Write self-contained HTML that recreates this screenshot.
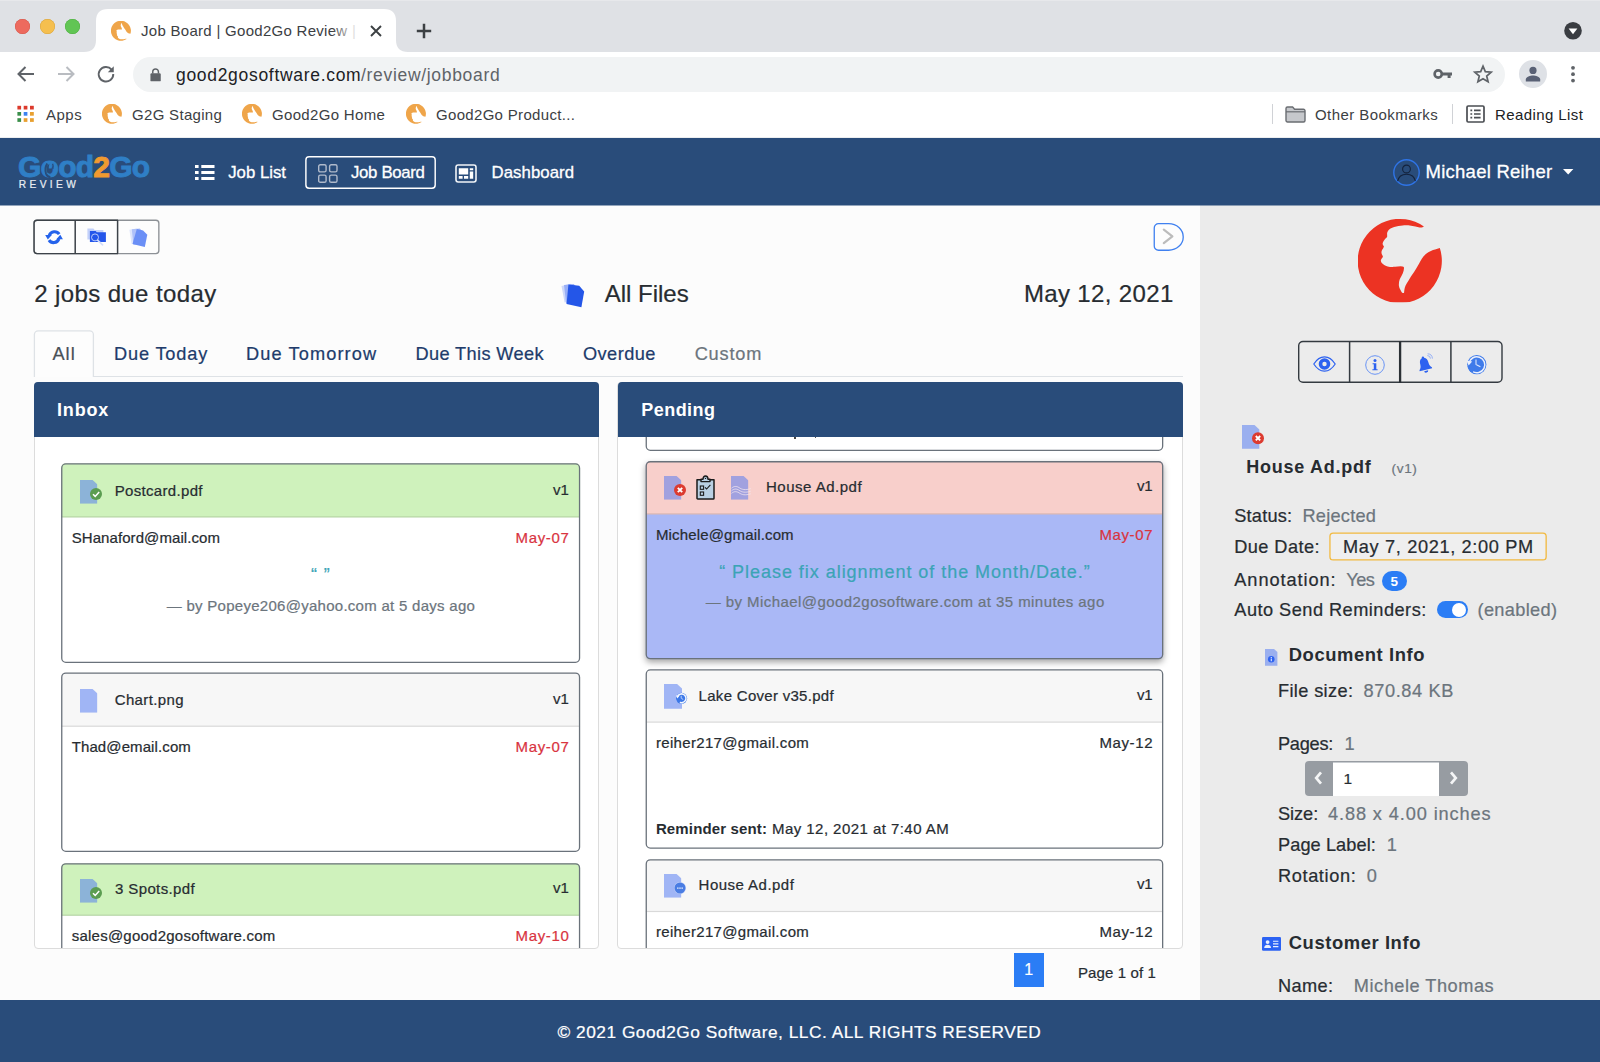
<!DOCTYPE html>
<html><head><meta charset="utf-8"><title>Job Board | Good2Go Review</title>
<style>
html,body{margin:0;padding:0;}
body{width:1600px;height:1062px;overflow:hidden;position:relative;background:#fcfcfc;font-family:"Liberation Sans",sans-serif;color:#272c31;}
.a{position:absolute;}
.t{position:absolute;white-space:pre;line-height:1;-webkit-text-stroke:0.22px currentColor;}
.b{font-weight:bold;}
svg{position:absolute;overflow:visible;}
</style></head><body>
<!-- ===== Browser chrome ===== -->
<div class="a" style="left:0;top:0;width:1600px;height:52px;background:#dfe1e5;"></div><div class="a" style="left:0;top:0;width:1600px;height:1px;background:#e7e8eb;"></div>
<div class="a" style="left:0;top:52px;width:1600px;height:85px;background:#fff;"></div>
<div class="a" style="left:0;top:137px;width:1600px;height:1px;background:#eceef0;"></div>
<!-- active tab -->
<svg style="left:84px;top:9px;" width="326" height="43" viewBox="0 0 326 43"><path d="M0 43 C8 43 12 39 12 31 V12 C12 4 16 0 24 0 H300 C308 0 312 4 312 12 V31 C312 39 316 43 324 43 Z" fill="#fff"/></svg>
<!-- traffic lights -->
<div class="a" style="left:14.5px;top:19px;width:15px;height:15px;border-radius:50%;background:#ed6a5e;box-shadow:inset 0 0 0 0.5px #d5564a;"></div>
<div class="a" style="left:39.5px;top:19px;width:15px;height:15px;border-radius:50%;background:#f5bf4f;box-shadow:inset 0 0 0 0.5px #d9a43c;"></div>
<div class="a" style="left:64.5px;top:19px;width:15px;height:15px;border-radius:50%;background:#61c554;box-shadow:inset 0 0 0 0.5px #4dae3f;"></div>
<!-- favicon symbol -->
<svg width="0" height="0" style="position:absolute"><defs>
<symbol id="fav" viewBox="0 0 100 100"><path fill="#efa54a" transform="matrix(1 0 0 -1 0 100)" d="M78.2 10.05 A50 50 0 1 0 97.2 35.75 C93 37 90 37.8 86.6 39.1 C82.5 41 80 43 77.7 45.8 C75 49.5 73 53.5 70.9 57 C68.5 61.5 65.5 65.5 63.1 69.3 C61 73 58.5 77 56.4 80.4 C55.2 83 55 86 54.7 88.8 C53.6 89.6 52.4 88.8 51.4 87.2 C50.3 85 48.9 83 48.6 80.4 C48.3 77.5 48.9 75 49.7 72.6 C50.8 70.3 52.2 68.2 53.1 65.9 C54 63.8 54.6 61.5 54.7 59.2 C54.6 57.8 53.6 57.5 52 57.5 C49.5 57.2 46.5 58 44.1 58 C41 58.2 38 58.2 35.2 57.5 C33 56.9 31 56 29.6 54.7 C28 53.4 26.9 51.8 27.2 50.3 C27.5 48.5 29.4 47.4 29.6 45.8 C29.5 44.6 27.6 43 27.9 40.2 C28.1 38 29.6 36.6 30.2 35.2 C30.6 34.6 30.9 34 30.7 33.5 C30.2 32.6 28.8 31.4 29.4 29.6 C30 27.5 31.2 26 32.4 24.6 C33.3 23.8 34.4 23.2 34.6 22.3 C34.8 20.8 34.4 19.4 34.6 17.9 C35 16 36 14.6 37.4 13.4 C39 12 40.8 11.2 43 10.6 C46.2 9.8 49.8 9.3 53.1 8.9 C56.5 8.6 59.8 8.8 63.1 9.2 C66.5 9.7 70 10.6 73.2 11.2 C75.2 11.4 77.2 11.2 78.2 10.05 Z"/></symbol>
</defs></svg>
<svg style="left:111px;top:20.5px;" width="20" height="20"><use href="#fav"/></svg>
<!-- tab close / new tab -->
<svg style="left:369px;top:24px;" width="14" height="14" viewBox="0 0 14 14"><path d="M2 2 L12 12 M12 2 L2 12" stroke="#3c4043" stroke-width="1.9" fill="none"/></svg>
<svg style="left:415px;top:22px;" width="18" height="18" viewBox="0 0 18 18"><path d="M9 1.8 V16.2 M1.8 9 H16.2" stroke="#3c4043" stroke-width="2.5" fill="none"/></svg>
<div class="a" style="left:332px;top:16px;width:30px;height:30px;background:linear-gradient(to right,rgba(255,255,255,0),rgba(255,255,255,0.82) 70%,rgba(255,255,255,0.9));z-index:3;"></div>
<!-- tab dropdown -->
<svg style="left:1563px;top:21px;" width="20" height="20" viewBox="0 0 20 20"><circle cx="10" cy="9.8" r="8.8" fill="#3a3d42"/><path d="M5.6 7.4 H14.4 L10 13.2 Z" fill="#fff"/></svg>
<!-- nav arrows -->
<svg style="left:16px;top:65px;" width="20" height="18" viewBox="0 0 20 18"><path d="M18 9 H3 M9.5 2 L2.5 9 L9.5 16" stroke="#5f6368" stroke-width="2" fill="none"/></svg>
<svg style="left:56px;top:65px;" width="20" height="18" viewBox="0 0 20 18"><path d="M2 9 H17 M10.5 2 L17.5 9 L10.5 16" stroke="#b9bcc1" stroke-width="2" fill="none"/></svg>
<svg style="left:96px;top:64px;" width="20" height="20" viewBox="0 0 22 22"><path d="M17.2 6.2 A8 8 0 1 0 19 11" stroke="#5f6368" stroke-width="2.1" fill="none"/><path d="M19.5 2.5 V9 H13 Z" fill="#5f6368"/></svg>
<!-- url pill -->
<div class="a" style="left:133px;top:57px;width:1372px;height:35px;border-radius:17.5px;background:#f1f3f4;"></div>
<svg style="left:150.3px;top:67.6px;" width="11.2" height="13.8" viewBox="0 0 13 16"><rect x="0.5" y="6.2" width="12" height="9.3" rx="1.4" fill="#5f6368"/><path d="M3.2 6.5 V4.4 A3.3 3.3 0 0 1 9.8 4.4 V6.5" stroke="#5f6368" stroke-width="1.7" fill="none"/></svg>
<!-- key -->
<svg style="left:1433px;top:67px;" width="20" height="14" viewBox="0 0 20 14"><circle cx="5.2" cy="7" r="3.6" stroke="#5f6368" stroke-width="2.6" fill="none"/><path d="M9 5.6 H19 V8.4 H17.6 V11 H14.6 V8.4 H9 Z" fill="#5f6368"/></svg>
<!-- star -->
<svg style="left:1473px;top:64px;" width="20" height="20" viewBox="0 0 20 20"><path d="M10 2.2 L12.3 7.6 L18.2 8.1 L13.7 12 L15.1 17.8 L10 14.7 L4.9 17.8 L6.3 12 L1.8 8.1 L7.7 7.6 Z" stroke="#5f6368" stroke-width="1.7" fill="none" stroke-linejoin="miter"/></svg>
<!-- profile -->
<div class="a" style="left:1519px;top:60px;width:28px;height:28px;border-radius:50%;background:#dee1e6;"></div>
<svg style="left:1525px;top:66px;" width="16" height="16" viewBox="0 0 16 16"><circle cx="8" cy="4.4" r="3.6" fill="#596175"/><path d="M0.8 15.5 V13.4 C0.8 10.6 5.5 9.4 8 9.4 C10.5 9.4 15.2 10.6 15.2 13.4 V15.5 Z" fill="#596175"/></svg>
<svg style="left:1570px;top:64px;" width="6" height="20" viewBox="0 0 6 20"><circle cx="3" cy="3.8" r="1.9" fill="#5f6368"/><circle cx="3" cy="10.2" r="1.9" fill="#5f6368"/><circle cx="3" cy="16.6" r="1.9" fill="#5f6368"/></svg>
<!-- bookmarks bar -->
<svg style="left:17px;top:105px;" width="18" height="18" viewBox="17 105 18 18">
<rect x="17.4" y="105.8" width="3.7" height="3.7" fill="#dc3a2c"/><rect x="23.7" y="105.8" width="3.7" height="3.7" fill="#dc3a2c"/><rect x="30" y="105.8" width="3.8" height="3.7" fill="#dc3a2c"/>
<rect x="17.4" y="112" width="3.7" height="3.7" fill="#3b8f4a"/><rect x="23.7" y="112" width="3.7" height="3.7" fill="#3b82f0"/><rect x="30" y="112" width="3.8" height="3.7" fill="#e8a030"/>
<rect x="17.4" y="118.2" width="3.7" height="3.7" fill="#3b8f4a"/><rect x="23.7" y="118.2" width="3.7" height="3.7" fill="#e8a030"/><rect x="30" y="118.2" width="3.8" height="3.7" fill="#e8a030"/></svg>
<svg style="left:102px;top:104px;" width="20" height="20"><use href="#fav"/></svg>
<svg style="left:242px;top:104px;" width="20" height="20"><use href="#fav"/></svg>
<svg style="left:406px;top:104px;" width="20" height="20"><use href="#fav"/></svg>
<div class="a" style="left:1272px;top:104px;width:1px;height:20px;background:#d0d2d6;"></div>
<div class="a" style="left:1452px;top:104px;width:1px;height:20px;background:#d0d2d6;"></div>
<svg style="left:1285px;top:106px;" width="21" height="17" viewBox="0 0 21 17"><path d="M1 2.5 A1.5 1.5 0 0 1 2.5 1 H7.6 L9.6 3.2 H18.5 A1.5 1.5 0 0 1 20 4.7 V14.5 A1.5 1.5 0 0 1 18.5 16 H2.5 A1.5 1.5 0 0 1 1 14.5 Z" fill="#c6c8cc" stroke="#6a6d72" stroke-width="1.4"/><path d="M1 5.8 H20" stroke="#6a6d72" stroke-width="1.2"/></svg>
<svg style="left:1466px;top:105px;" width="19" height="18" viewBox="0 0 19 18"><rect x="1" y="1" width="17" height="16" rx="1.2" fill="none" stroke="#4a4d52" stroke-width="1.7"/><path d="M4.4 5.4 H6.2 M8 5.4 H14.6 M4.4 9 H6.2 M8 9 H14.6 M4.4 12.6 H6.2 M8 12.6 H14.6" stroke="#4a4d52" stroke-width="1.6"/></svg>

<!-- ===== App navbar ===== -->
<div class="a" style="left:0;top:138px;width:1600px;height:67px;background:#294c7a;"></div>
<div class="a" style="left:0;top:205px;width:1200px;height:1px;background:#93a5bc;z-index:2;"></div><div class="a" style="left:1200px;top:205px;width:400px;height:1px;background:#8a9cb3;z-index:2;"></div>
<div class="a" style="left:0;top:1000px;width:1600px;height:62px;background:#294c7a;"></div>
<!-- sidebar bg -->
<div class="a" style="left:1200px;top:205px;width:400px;height:795px;background:#ebebeb;"></div>
<!-- symbols -->
<svg width="0" height="0" style="position:absolute"><defs>
<symbol id="thumb" viewBox="0 0 100 100"><path d="M78.2 10.05 A50 50 0 1 0 97.2 35.75 C93 37 90 37.8 86.6 39.1 C82.5 41 80 43 77.7 45.8 C75 49.5 73 53.5 70.9 57 C68.5 61.5 65.5 65.5 63.1 69.3 C61 73 58.5 77 56.4 80.4 C55.2 83 55 86 54.7 88.8 C53.6 89.6 52.4 88.8 51.4 87.2 C50.3 85 48.9 83 48.6 80.4 C48.3 77.5 48.9 75 49.7 72.6 C50.8 70.3 52.2 68.2 53.1 65.9 C54 63.8 54.6 61.5 54.7 59.2 C54.6 57.8 53.6 57.5 52 57.5 C49.5 57.2 46.5 58 44.1 58 C41 58.2 38 58.2 35.2 57.5 C33 56.9 31 56 29.6 54.7 C28 53.4 26.9 51.8 27.2 50.3 C27.5 48.5 29.4 47.4 29.6 45.8 C29.5 44.6 27.6 43 27.9 40.2 C28.1 38 29.6 36.6 30.2 35.2 C30.6 34.6 30.9 34 30.7 33.5 C30.2 32.6 28.8 31.4 29.4 29.6 C30 27.5 31.2 26 32.4 24.6 C33.3 23.8 34.4 23.2 34.6 22.3 C34.8 20.8 34.4 19.4 34.6 17.9 C35 16 36 14.6 37.4 13.4 C39 12 40.8 11.2 43 10.6 C46.2 9.8 49.8 9.3 53.1 8.9 C56.5 8.6 59.8 8.8 63.1 9.2 C66.5 9.7 70 10.6 73.2 11.2 C75.2 11.4 77.2 11.2 78.2 10.05 Z"/></symbol>
<symbol id="thumbup" viewBox="0 0 100 100"><use href="#thumb" transform="matrix(1 0 0 -1 0 100)"/></symbol>
<symbol id="file" viewBox="0 0 18 24"><path d="M0 0 H11.5 L18 6.5 V24 H0 Z"/></symbol>
</defs></svg>

<!-- navbar logo -->
<div class="t" style="left:18px;top:151.6px;font-size:30px;font-weight:bold;letter-spacing:-0.75px;color:#2f7fc6;-webkit-text-stroke:0.9px #2f7fc6;">Good<span style="color:#f09a30;-webkit-text-stroke:0.9px #f09a30;">2</span>Go</div>
<svg style="left:40px;top:158px;" width="20" height="22" viewBox="40 158 20 22"><path d="M50.6 162.2 C49.2 164.2 48.6 166.4 48.8 168.6 L51.6 168.4 C52.4 166.4 52 164 50.6 162.2 Z" fill="#2f7fc6"/><path d="M47.2 163.6 C45.4 166.6 45 170.6 46 173.6 C46.8 175.8 48.4 177 50.4 177.2" fill="none" stroke="#294c7a" stroke-width="1.9"/><path d="M52.6 163.8 C53.4 165.6 53.4 167.2 52.8 168.8" fill="none" stroke="#294c7a" stroke-width="1.3"/></svg>
<!-- nav icons -->
<svg style="left:195px;top:165px;" width="20" height="15" viewBox="0 0 20 15"><path d="M0 0 H3.6 V3 H0 Z M6.3 0 H19.5 V3 H6.3 Z M0 6 H3.6 V9 H0 Z M6.3 6 H19.5 V9 H6.3 Z M0 12 H3.6 V15 H0 Z M6.3 12 H19.5 V15 H6.3 Z" fill="#fff"/></svg>
<svg style="left:300px;top:150px;" width="142" height="46" viewBox="300 150 142 46"><rect x="305.9" y="156.8" width="129.3" height="31.4" rx="3.2" fill="none" stroke="#fff" stroke-width="1.45"/></svg>
<svg style="left:318px;top:164px;" width="20" height="19" viewBox="0 0 20 19"><g fill="none" stroke="#b0bacb" stroke-width="1.4"><rect x="0.7" y="0.7" width="7.4" height="7.2" rx="1.6"/><rect x="11.6" y="0.7" width="7.4" height="7.2" rx="1.6"/><rect x="0.7" y="11.1" width="7.4" height="7.2" rx="1.6"/><rect x="11.6" y="11.1" width="7.4" height="7.2" rx="1.6"/></g></svg>
<svg style="left:455px;top:164px;" width="22" height="19" viewBox="0 0 22 19"><rect x="1" y="1" width="20" height="17" rx="2.2" fill="none" stroke="#f1f4f8" stroke-width="1.6"/><path d="M3.8 4.2 H13.2 V10.4 H3.8 Z M14.8 4.2 H18.2 V6.2 H14.8 Z M14.8 7.6 H18.2 V14.8 H14.8 Z M3.8 12 H7.6 V14.8 H3.8 Z M9 12 H13.2 V14.8 H9 Z" fill="#fff"/></svg>
<!-- user -->
<svg style="left:1392.5px;top:159px;" width="27" height="27" viewBox="0 0 27 27"><circle cx="13.5" cy="13.5" r="12.7" fill="none" stroke="#2f74e6" stroke-width="1.4"/><circle cx="13.5" cy="10" r="3.9" fill="none" stroke="#14233d" stroke-width="1.1"/><path d="M4.6 22.2 C5.6 17.4 9.4 15.2 13.5 15.2 C17.6 15.2 21.4 17.4 22.4 22.2" fill="none" stroke="#14233d" stroke-width="1.1"/></svg>
<svg style="left:1563px;top:168.5px;" width="11" height="6" viewBox="0 0 11 6"><path d="M0 0 H10.4 L5.2 5.4 Z" fill="#fff"/></svg>

<!-- toolbar button group -->
<svg style="left:0;top:0;" width="1600" height="300" viewBox="0 0 1600 300">
<rect x="34.05" y="220.25" width="124.8" height="33.3" rx="3" fill="#fdfdfd" stroke="#8d9196" stroke-width="1.35"/>
<path d="M118 220.25 H37 A3 3 0 0 0 34.05 223.25 V250.55 A3 3 0 0 0 37 253.55 H118" fill="none" stroke="#3d4349" stroke-width="1.35"/>
<path d="M75.2 220 V253.8 M117.6 220 V253.8" stroke="#3d4349" stroke-width="1.5"/>
<!-- refresh -->
<g fill="none" stroke="#2563eb" stroke-width="3.1"><path d="M49.3 235.4 A5.6 5.6 0 0 1 59.2 234.2"/><path d="M58.9 238.9 A5.6 5.6 0 0 1 49 240.1"/></g>
<path d="M45.2 235 L51.8 235 L47.8 239.6 Z M62.9 239.3 L56.3 239.3 L60.3 234.7 Z" fill="#2563eb"/>
<!-- folder search -->
<path d="M87.4 228.6 H93.4 L94.6 230 H103.4 V239.6 H87.4 Z" fill="#c3d1fa"/>
<path d="M89.9 231 H95.6 L96.8 232.3 H105.9 V242 H89.9 Z" fill="#2456ea"/>
<circle cx="95" cy="237.4" r="3.5" fill="#2456ea" stroke="#c9d6fa" stroke-width="0.9"/>
<path d="M97.8 240.4 L102.6 244.8" stroke="#d3ddfb" stroke-width="1.7" stroke-linecap="round"/>
<!-- files -->
<path d="M129.4 229.8 L136.6 228.4 L139 230.6 L140 242.6 L131.6 244 Z" fill="#dde5fc"/>
<path d="M131.8 229.2 L139.8 228.6 L142.4 231.2 L142.8 244.2 L133.4 244.8 Z" fill="#afc1f9"/>
<path d="M136.8 228.9 L143.1 230.6 L147.3 234.8 L144.8 247.1 L132.5 244.1 Z" fill="#6b8ff6"/>
</svg>
<!-- collapse -->
<svg style="left:1150px;top:218px;" width="40" height="38" viewBox="1150 218 40 38"><path d="M1158.6 223.6 H1168.6 A14.6 13.3 0 0 1 1168.6 250.25 H1158.6 A4.3 4.3 0 0 1 1154.25 245.9 V227.95 A4.3 4.3 0 0 1 1158.6 223.6 Z" fill="#fdfdfd" stroke="#3f80f0" stroke-width="1.3"/><path d="M1163.8 229.7 L1172.4 236.4 L1163.8 243.1" fill="none" stroke="#bcbcbc" stroke-width="2.2" stroke-linecap="round" stroke-linejoin="round"/></svg>
<!-- all files icon -->
<svg style="left:561px;top:283px;" width="24" height="25" viewBox="0 0 24 25"><path d="M0.5 3 L9.5 0.8 L13 4 L14.5 17 L3.6 19.4 Z" fill="#cdd8fa"/><path d="M3 2 L12.6 1 L16.4 4.8 L16.8 19 L5.2 20.6 Z" fill="#98aff7"/><path d="M7.4 1.4 L18.2 2.8 L23.2 8.4 L20.4 24.2 L5.6 21 Z" fill="#2456e8"/></svg>

<!-- tabs -->
<div class="a" style="left:34px;top:375.6px;width:1149px;height:1.3px;background:#dee2e6;"></div>
<svg style="left:30px;top:326px;" width="70" height="54" viewBox="30 326 70 54"><path d="M34.4 377 V334.6 A3.8 3.8 0 0 1 38.2 330.8 H89.6 A3.8 3.8 0 0 1 93.4 334.6 V377" fill="#fdfdfd" stroke="#dee2e6" stroke-width="1.3"/></svg>
<!-- columns -->
<div class="a" style="left:34px;top:382px;width:563px;height:565px;border:1px solid #dcdcdc;border-radius:4px;background:#fff;"></div>
<div class="a" style="left:34px;top:382px;width:565px;height:55px;background:#294c7a;border-radius:4px 4px 0 0;"></div>
<div class="a" style="left:617px;top:382px;width:564px;height:565px;border:1px solid #dcdcdc;border-radius:4px;background:#fff;"></div>
<div class="a" style="left:617.5px;top:382px;width:565.5px;height:55px;background:#294c7a;border-radius:4px 4px 0 0;"></div>
<!-- inbox cards -->
<div class="a" style="left:35px;top:437px;width:563px;height:510.5px;overflow:hidden;">
<svg style="left:14px;top:14px;" width="545" height="229" viewBox="49 451 545 229"><defs><clipPath id="cc1"><rect x="61.1" y="463.3" width="519.1" height="199.7" rx="4.5"/></clipPath></defs><g clip-path="url(#cc1)"><rect x="61.1" y="463.3" width="519.1" height="199.7" fill="#fff"/><rect x="61.1" y="463.3" width="519.1" height="54.2" fill="#cff2bc"/><rect x="61.1" y="516.30" width="519.1" height="1.2" fill="#000" fill-opacity="0.12"/></g><rect x="61.75" y="463.95" width="517.80" height="198.40" rx="4.1" fill="none" stroke="#6a727b" stroke-width="1.3"/></svg>
<svg style="left:14px;top:223px;" width="545" height="209" viewBox="49 660 545 209"><defs><clipPath id="cc2"><rect x="61.1" y="672.4" width="519.1" height="179.6" rx="4.5"/></clipPath></defs><g clip-path="url(#cc2)"><rect x="61.1" y="672.4" width="519.1" height="179.6" fill="#fff"/><rect x="61.1" y="672.4" width="519.1" height="54.4" fill="#f7f7f7"/><rect x="61.1" y="725.60" width="519.1" height="1.2" fill="#000" fill-opacity="0.12"/></g><rect x="61.75" y="673.05" width="517.80" height="178.30" rx="4.1" fill="none" stroke="#6a727b" stroke-width="1.3"/></svg>
<svg style="left:14px;top:414px;" width="545" height="228" viewBox="49 851 545 228"><defs><clipPath id="cc3"><rect x="61.1" y="863.2" width="519.1" height="199" rx="4.5"/></clipPath></defs><g clip-path="url(#cc3)"><rect x="61.1" y="863.2" width="519.1" height="199" fill="#fff"/><rect x="61.1" y="863.2" width="519.1" height="52.6" fill="#cff2bc"/><rect x="61.1" y="914.60" width="519.1" height="1.2" fill="#000" fill-opacity="0.12"/></g><rect x="61.75" y="863.85" width="517.80" height="197.70" rx="4.1" fill="none" stroke="#6a727b" stroke-width="1.3"/></svg>
</div>
<!-- pending cards -->
<div class="a" style="left:618px;top:437px;width:564px;height:510.5px;overflow:hidden;">
<svg style="left:15px;top:-149px;" width="543" height="180" viewBox="633 288 543 180"><defs><clipPath id="cc4"><rect x="645.6" y="300" width="517.7" height="151" rx="4.5"/></clipPath></defs><g clip-path="url(#cc4)"><rect x="645.6" y="300" width="517.7" height="151" fill="#fff"/><rect x="645.6" y="300" width="517.7" height="53" fill="#f7f7f7"/><rect x="645.6" y="351.80" width="517.7" height="1.2" fill="#000" fill-opacity="0.12"/></g><rect x="646.25" y="300.65" width="516.40" height="149.70" rx="4.1" fill="none" stroke="#6a727b" stroke-width="1.3"/></svg>
<svg style="left:15px;top:12px;" width="543" height="228" viewBox="633 449 543 228"><defs><clipPath id="cc5"><rect x="645.6" y="461.1" width="517.7" height="198.2" rx="4.5"/></clipPath><filter id="sh5" x="-10%" y="-10%" width="120%" height="130%"><feGaussianBlur stdDeviation="3.4"/></filter></defs><rect x="645.6" y="464.1" width="517.7" height="198.2" rx="4.5" fill="#000" fill-opacity="0.36" filter="url(#sh5)"/><g clip-path="url(#cc5)"><rect x="645.6" y="461.1" width="517.7" height="198.2" fill="#aab8f6"/><rect x="645.6" y="461.1" width="517.7" height="53.4" fill="#f8cfcb"/><rect x="645.6" y="513.30" width="517.7" height="1.2" fill="#000" fill-opacity="0.12"/></g><rect x="646.25" y="461.75" width="516.40" height="196.90" rx="4.1" fill="none" stroke="#6a727b" stroke-width="1.3"/></svg>
<svg style="left:15px;top:220px;" width="543" height="209" viewBox="633 657 543 209"><defs><clipPath id="cc6"><rect x="645.6" y="669.3" width="517.7" height="179.4" rx="4.5"/></clipPath></defs><g clip-path="url(#cc6)"><rect x="645.6" y="669.3" width="517.7" height="179.4" fill="#fff"/><rect x="645.6" y="669.3" width="517.7" height="53.4" fill="#f7f7f7"/><rect x="645.6" y="721.50" width="517.7" height="1.2" fill="#000" fill-opacity="0.12"/></g><rect x="646.25" y="669.95" width="516.40" height="178.10" rx="4.1" fill="none" stroke="#6a727b" stroke-width="1.3"/></svg>
<svg style="left:15px;top:410px;" width="543" height="228" viewBox="633 847 543 228"><defs><clipPath id="cc7"><rect x="645.6" y="859.2" width="517.7" height="199" rx="4.5"/></clipPath></defs><g clip-path="url(#cc7)"><rect x="645.6" y="859.2" width="517.7" height="199" fill="#fff"/><rect x="645.6" y="859.2" width="517.7" height="52.9" fill="#f7f7f7"/><rect x="645.6" y="910.90" width="517.7" height="1.2" fill="#000" fill-opacity="0.12"/></g><rect x="646.25" y="859.85" width="516.40" height="197.70" rx="4.1" fill="none" stroke="#6a727b" stroke-width="1.3"/></svg>
</div>
<div class="a" style="left:794px;top:437px;width:2px;height:1.6px;background:#444;"></div><div class="a" style="left:814.6px;top:437px;width:1.3px;height:1.2px;background:#555;"></div>
<!-- file icons -->
<svg width="0" height="0" style="position:absolute"><defs>
<symbol id="fi" viewBox="0 0 17.4 23.8"><path d="M0 0 H12.6 L17.4 4.4 V23.8 H0 Z" fill="rgb(74,115,243)" fill-opacity="0.5"/></symbol>
<symbol id="bOK" viewBox="0 0 12 12"><circle cx="6" cy="6" r="6" fill="#5b9d51"/><path d="M3 6.3 L5.2 8.4 L9.2 3.9" fill="none" stroke="#fff" stroke-width="1.5"/></symbol>
<symbol id="bX" viewBox="0 0 12 12"><circle cx="6" cy="6" r="6" fill="#dc3b30"/><path d="M3.8 3.8 L8.2 8.2 M8.2 3.8 L3.8 8.2" fill="none" stroke="#fff" stroke-width="1.9"/></symbol>
<symbol id="bDots" viewBox="0 0 12 12"><circle cx="6" cy="6" r="6" fill="#c5d3f8"/><circle cx="6" cy="6" r="5.5" fill="#4a7de3"/><path d="M3 5.5 H4.6 V6.8 H3 Z M5.2 5.5 H6.8 V6.8 H5.2 Z M7.4 5.5 H9 V6.8 H7.4 Z" fill="#dfe8fb"/></symbol>
<symbol id="bHist" viewBox="0 0 12 12"><circle cx="6" cy="6" r="5.3" fill="#3b78e8"/><path d="M1.6 5.2 A4.6 4.6 0 1 1 3.6 9.9" fill="none" stroke="#f1f5fe" stroke-width="1.3"/><path d="M0.4 3.6 L3.6 4.2 L1.4 6.6 Z" fill="#f1f5fe"/><path d="M5.4 3.4 V6 L7.6 7" fill="none" stroke="#dfe8fb" stroke-width="0.9"/><path d="M1.2 7.2 A5 5 0 0 0 4 10.6 L6 6.5 Z" fill="#3b78e8"/></symbol>
</defs></svg>
<!-- inbox -->
<svg style="left:80px;top:480px;" width="17.4" height="23.8"><use href="#fi"/></svg>
<svg style="left:90px;top:487.5px;" width="12" height="12"><use href="#bOK"/></svg>
<svg style="left:80px;top:688.5px;" width="17.4" height="23.8"><use href="#fi"/></svg>
<svg style="left:80px;top:879px;" width="17.4" height="23.8"><use href="#fi"/></svg>
<svg style="left:90px;top:886.5px;" width="12" height="12"><use href="#bOK"/></svg>
<!-- pending -->
<svg style="left:663.5px;top:476.1px;" width="17.4" height="23.8"><use href="#fi"/></svg>
<svg style="left:673.8px;top:483.8px;" width="12" height="12"><use href="#bX"/></svg>
<svg style="left:696px;top:475px;" width="19" height="25" viewBox="0 0 19 25"><path d="M1 4.8 H18 V23.2 A0.8 0.8 0 0 1 17.2 24 H1.8 A0.8 0.8 0 0 1 1 23.2 Z" fill="#b9d0e3" stroke="#1b1b1b" stroke-width="1.5" stroke-linejoin="round"/><path d="M5 6.6 V4.2 H7 C7 2.4 7.8 1 9.5 1 C11.2 1 12 2.4 12 4.2 H14 V6.6 Z" fill="#b9d0e3" stroke="#1b1b1b" stroke-width="1.4" stroke-linejoin="round"/><circle cx="9.5" cy="3.4" r="0.7" fill="#1b1b1b"/><rect x="4.3" y="11" width="3.3" height="3.3" fill="none" stroke="#1b1b1b" stroke-width="1.1"/><rect x="4.3" y="17" width="3.3" height="3.3" fill="none" stroke="#1b1b1b" stroke-width="1.1"/><path d="M9 12.4 L10.6 14 L14.4 9.8" fill="none" stroke="#1b1b1b" stroke-width="1.1"/></svg>
<svg style="left:731.2px;top:476.1px;" width="17.4" height="23.8"><use href="#fi"/></svg>
<svg style="left:731px;top:485px;" width="21" height="12" viewBox="0 0 21 12"><g fill="none" stroke="#f3e6ef" stroke-width="0.8" stroke-opacity="0.95"><path d="M0.5 3.2 C3 1 5.5 1 8 2.6 C11 4.6 14 5.4 19.8 3.6"/><path d="M0.5 5.8 C3 3.6 5.5 3.6 8 5.2 C11 7.2 14 8 19.8 6.2"/><path d="M0.5 8.4 C3 6.2 5.5 6.2 8 7.8 C11 9.8 14 10.6 19.8 8.8"/></g></svg>
<svg style="left:664px;top:684px;" width="18" height="24.8" viewBox="0 0 17.4 23.8" preserveAspectRatio="none"><path d="M0 0 H12.6 L17.4 4.4 V23.8 H0 Z" fill="rgb(74,115,243)" fill-opacity="0.5"/></svg>
<svg style="left:670px;top:686px;" width="24" height="24" viewBox="670 686 24 24"><circle cx="681.6" cy="698.3" r="5.5" fill="#3b78e8"/><path d="M677.5 696.6 A4.4 4.4 0 1 1 679.2 702" fill="none" stroke="#f4f7fe" stroke-width="1.5"/><path d="M675.9 695.4 L679.6 695.6 L677.4 698.6 Z" fill="#f4f7fe"/><path d="M681.2 695.8 V698.4 L683.2 699.4" fill="none" stroke="#cfdcfa" stroke-width="0.9"/><path d="M676.6 699.4 A5.3 5.3 0 0 0 679.4 703.2 L681.6 698.6 Z" fill="#3b78e8"/></svg>
<svg style="left:663.5px;top:874px;" width="17.4" height="23.8"><use href="#fi"/></svg>
<svg style="left:673.5px;top:881.6px;" width="12" height="12"><use href="#bDots"/></svg>
<!-- pagination -->
<div class="a" style="left:1013.5px;top:953px;width:30px;height:33.5px;background:#2b7df5;"></div>

<!-- ===== sidebar ===== -->
<svg style="left:1358px;top:217.6px;" width="84.2" height="84.2"><use href="#thumb" fill="#ec3323"/></svg>
<svg style="left:1290px;top:335px;" width="220" height="55" viewBox="1290 335 220 55"><rect x="1298.7" y="341.55" width="203.3" height="40.7" rx="4.3" fill="#ececec" stroke="#343a40" stroke-width="1.4"/><path d="M1349.6 341 V382.8 M1450.9 341 V382.8" stroke="#343a40" stroke-width="1.5"/><path d="M1400.1 341 V382.8" stroke="#2b3035" stroke-width="2.3"/></svg>
<!-- eye -->
<svg style="left:1312.5px;top:356px;" width="23" height="16" viewBox="0 0 23 16"><path d="M0.8 8 C4 3 7.6 0.9 11.5 0.9 C15.4 0.9 19 3 22.2 8 C19 13 15.4 15.1 11.5 15.1 C7.6 15.1 4 13 0.8 8 Z" fill="none" stroke="#2d62f0" stroke-width="1.2"/><circle cx="11.5" cy="8" r="4" fill="none" stroke="#2d62f0" stroke-width="3.6"/></svg>
<!-- info -->
<svg style="left:1365px;top:354.5px;" width="20" height="20" viewBox="0 0 20 20"><circle cx="10" cy="10" r="9.3" fill="none" stroke="#5b8af5" stroke-width="0.9"/><circle cx="10" cy="5.4" r="1.5" fill="#2d62f0"/><path d="M7.6 8.2 H11.3 V14.2 H12.6 V15.2 H7.4 V14.2 H8.8 V9.2 H7.6 Z" fill="#2d62f0"/></svg>
<!-- bell -->
<svg style="left:1418px;top:352.5px;" width="16" height="21" viewBox="0 0 16 21"><g transform="rotate(-14 7 13)"><path d="M7 4.6 C3.8 4.6 2.8 7.6 2.8 10.4 C2.8 13 2 14.6 0.6 15.8 V16.8 H13.4 V15.8 C12 14.6 11.2 13 11.2 10.4 C11.2 7.6 10.2 4.6 7 4.6 Z" fill="#2d62f0"/><circle cx="7" cy="4.4" r="1.2" fill="#2d62f0"/><path d="M5 17.8 A2 2 0 0 0 9 17.8 Z" fill="#2d62f0"/></g><g fill="none" stroke="#8aa8f6" stroke-width="0.9"><path d="M9.4 2.6 A3 3 0 0 1 12.4 5.6"/><path d="M9.6 0.8 A5 5 0 0 1 14.4 5.6"/></g></svg>
<!-- history -->
<svg style="left:1465.5px;top:353.5px;" width="21" height="21" viewBox="0 0 21 21"><circle cx="10.8" cy="10.6" r="9.6" fill="#3f7bea"/><path d="M3 9 A8 8 0 1 1 6.4 17.4" fill="none" stroke="#ecf1fd" stroke-width="1.5"/><path d="M0.6 6.6 L6.2 7.4 L2.6 11.6 Z" fill="#ecf1fd"/><path d="M10 5.4 V10.6 L14.4 12.8" fill="none" stroke="#dbe5fb" stroke-width="1.1"/><path d="M1.6 12 A9.4 9.4 0 0 0 6.6 19 L10.6 10.8 Z" fill="#3f7bea"/></svg>
<!-- sidebar file icon -->
<svg style="left:1242px;top:425px;" width="17.3" height="23.8" viewBox="0 0 17.4 23.8" preserveAspectRatio="none"><path d="M0 0 H12.6 L17.4 4.4 V23.8 H0 Z" fill="rgb(74,115,243)" fill-opacity="0.5"/></svg>
<svg style="left:1252px;top:432px;" width="12" height="12.4"><use href="#bX"/></svg>
<!-- due date box -->
<svg style="left:1328px;top:531px;" width="222" height="32" viewBox="1328 531 222 32"><rect x="1329.95" y="533.15" width="216.2" height="26.7" rx="3.2" fill="#efefef" stroke="#f2b93f" stroke-width="1.3"/></svg>
<!-- annotation badge -->
<div class="a" style="left:1381.8px;top:571.3px;width:25px;height:19.5px;border-radius:10px;background:#2b7df5;"></div>
<!-- toggle -->
<div class="a" style="left:1436.8px;top:600.8px;width:31.2px;height:17.5px;border-radius:9px;background:#2b7df5;"></div>
<div class="a" style="left:1452.4px;top:602.6px;width:14px;height:14px;border-radius:50%;background:#fff;"></div>
<!-- doc info icon -->
<svg style="left:1265px;top:649px;" width="12.4" height="16.8" viewBox="0 0 17.4 23.8" preserveAspectRatio="none"><path d="M0 0 H12.6 L17.4 4.4 V23.8 H0 Z" fill="rgb(74,115,243)" fill-opacity="0.5"/><circle cx="8.8" cy="14.6" r="4.6" fill="#2d62f0"/><path d="M8 13.6 H9.8 V17.4 H8 Z M8 11.4 H9.8 V12.8 H8 Z" fill="#c9d7fb"/></svg>
<!-- pager -->
<div class="a" style="left:1305px;top:761px;width:163px;height:35px;border-radius:4px;background:#979ca2;"></div>
<div class="a" style="left:1333px;top:762.3px;width:106.2px;height:32.4px;background:#fff;border-top:0.6px solid #c8ccd0;"></div>
<svg style="left:1314px;top:771px;" width="9" height="14" viewBox="0 0 9 14"><path d="M7 1.4 L2.2 7 L7 12.6" fill="none" stroke="#f4f5f6" stroke-width="2.7"/></svg>
<svg style="left:1449px;top:771px;" width="9" height="14" viewBox="0 0 9 14"><path d="M2 1.4 L6.8 7 L2 12.6" fill="none" stroke="#f4f5f6" stroke-width="2.7"/></svg>
<!-- customer icon -->
<svg style="left:1262px;top:937px;" width="19" height="13.8" viewBox="0 0 19 13.6" preserveAspectRatio="none"><rect x="0" y="0" width="19" height="13.6" rx="1.2" fill="#2b62f3"/><circle cx="5.6" cy="5" r="1.9" fill="#e9effe"/><path d="M2.2 10.8 C2.2 8.4 3.8 7.6 5.6 7.6 C7.4 7.6 9 8.4 9 10.8 Z" fill="#e9effe"/><path d="M11 4.2 H16.4 M11 6.8 H16.4 M11 9.4 H16.4" stroke="#e9effe" stroke-width="1.2"/></svg>
<div class="t" id="t0" style="left:141px;top:23px;font-size:15px;color:#3c4043;-webkit-text-stroke:0;letter-spacing:0.288px;">Job Board | Good2Go Review |</div>
<div class="t" id="t1" style="left:176px;top:67px;font-size:17.5px;color:#202124;-webkit-text-stroke:0;letter-spacing:0.692px;">good2gosoftware.com</div>
<div class="t" id="t2" style="left:361px;top:67px;font-size:17.5px;color:#5f6368;-webkit-text-stroke:0;letter-spacing:0.683px;">/review/jobboard</div>
<div class="t" id="t3" style="left:46px;top:107px;font-size:15px;color:#3c4043;-webkit-text-stroke:0;letter-spacing:0.513px;">Apps</div>
<div class="t" id="t4" style="left:132px;top:107px;font-size:15px;color:#3c4043;-webkit-text-stroke:0;letter-spacing:0.312px;">G2G Staging</div>
<div class="t" id="t5" style="left:272px;top:107px;font-size:15px;color:#3c4043;-webkit-text-stroke:0;letter-spacing:0.327px;">Good2Go Home</div>
<div class="t" id="t6" style="left:436px;top:107px;font-size:15px;color:#3c4043;-webkit-text-stroke:0;letter-spacing:0.319px;">Good2Go Product...</div>
<div class="t" id="t7" style="left:1315px;top:107px;font-size:15px;color:#3c4043;-webkit-text-stroke:0;letter-spacing:0.433px;">Other Bookmarks</div>
<div class="t" id="t8" style="left:1495px;top:107px;font-size:15px;color:#202124;-webkit-text-stroke:0;letter-spacing:0.401px;">Reading List</div>
<div class="t" id="t9" style="left:18.8px;top:180px;font-size:10.2px;color:#e8ecf2;letter-spacing:3.363px;">REVIEW</div>
<div class="t" id="t10" style="left:228.2px;top:165px;font-size:16.8px;color:#fff;-webkit-text-stroke:0.3px #fff;letter-spacing:-0.006px;">Job List</div>
<div class="t" id="t11" style="left:351px;top:165px;font-size:16.8px;color:#fff;-webkit-text-stroke:0.3px #fff;letter-spacing:-0.318px;">Job Board</div>
<div class="t" id="t12" style="left:491.6px;top:165px;font-size:16.8px;color:#fff;-webkit-text-stroke:0.3px #fff;letter-spacing:0.034px;">Dashboard</div>
<div class="t" id="t13" style="left:1425.6px;top:163px;font-size:18.5px;color:#fff;-webkit-text-stroke:0.3px #fff;letter-spacing:0.238px;">Michael Reiher</div>
<div class="t" id="t14" style="left:34.2px;top:282px;font-size:24px;letter-spacing:0.391px;">2 jobs due today</div>
<div class="t" id="t15" style="left:604.8px;top:282px;font-size:24px;letter-spacing:-0.014px;">All Files</div>
<div class="t" id="t16" style="left:1023.9px;top:282px;font-size:24px;letter-spacing:0.362px;">May 12, 2021</div>
<div class="t" id="t17" style="left:52.5px;top:345px;font-size:18.2px;color:#495057;letter-spacing:0.993px;">All</div>
<div class="t" id="t18" style="left:114px;top:345px;font-size:18.2px;color:#203b6b;letter-spacing:0.832px;">Due Today</div>
<div class="t" id="t19" style="left:246px;top:345px;font-size:18.2px;color:#203b6b;letter-spacing:1.110px;">Due Tomorrow</div>
<div class="t" id="t20" style="left:415.5px;top:345px;font-size:18.2px;color:#203b6b;letter-spacing:0.362px;">Due This Week</div>
<div class="t" id="t21" style="left:582.9px;top:345px;font-size:18.2px;color:#203b6b;letter-spacing:0.467px;">Overdue</div>
<div class="t" id="t22" style="left:694.7px;top:345px;font-size:18.2px;color:#6c757d;letter-spacing:0.787px;">Custom</div>
<div class="t" id="t23" style="left:57px;top:401px;font-size:18px;color:#fff;font-weight:bold;-webkit-text-stroke:0;letter-spacing:0.822px;">Inbox</div>
<div class="t" id="t24" style="left:641.2px;top:401px;font-size:18px;color:#fff;font-weight:bold;-webkit-text-stroke:0;letter-spacing:0.477px;">Pending</div>
<div class="t" id="t25" style="left:114.7px;top:483px;font-size:15px;letter-spacing:0.329px;">Postcard.pdf</div>
<div class="t" id="t26" style="left:553.1px;top:482px;font-size:15px;letter-spacing:-0.096px;">v1</div>
<div class="t" id="t27" style="left:71.7px;top:530px;font-size:15px;letter-spacing:0.077px;">SHanaford@mail.com</div>
<div class="t" id="t28" style="left:515.5px;top:530px;font-size:15px;color:#d9343f;letter-spacing:0.667px;">May-07</div>
<div class="t" id="t29" style="left:311px;top:566px;font-size:18px;color:#3ba4b6;letter-spacing:0.920px;">“ ”</div>
<div class="t" id="t30" style="left:166.7px;top:598px;font-size:15px;color:#6c757d;letter-spacing:0.277px;">— by Popeye206@yahoo.com at 5 days ago</div>
<div class="t" id="t31" style="left:114.7px;top:692px;font-size:15px;letter-spacing:0.379px;">Chart.png</div>
<div class="t" id="t32" style="left:553.1px;top:691px;font-size:15px;letter-spacing:-0.096px;">v1</div>
<div class="t" id="t33" style="left:71.7px;top:739px;font-size:15px;letter-spacing:0.105px;">Thad@email.com</div>
<div class="t" id="t34" style="left:515.5px;top:739px;font-size:15px;color:#d9343f;letter-spacing:0.667px;">May-07</div>
<div class="t" id="t35" style="left:115.1px;top:881px;font-size:15px;letter-spacing:0.363px;">3 Spots.pdf</div>
<div class="t" id="t36" style="left:553.1px;top:880px;font-size:15px;letter-spacing:-0.096px;">v1</div>
<div class="t" id="t37" style="left:71.7px;top:928px;font-size:15px;letter-spacing:0.239px;">sales@good2gosoftware.com</div>
<div class="t" id="t38" style="left:515.5px;top:928px;font-size:15px;color:#d9343f;letter-spacing:0.667px;">May-10</div>
<div class="t" id="t39" style="left:766px;top:479px;font-size:15px;letter-spacing:0.506px;">House Ad.pdf</div>
<div class="t" id="t40" style="left:1137px;top:478px;font-size:15px;letter-spacing:-0.229px;">v1</div>
<div class="t" id="t41" style="left:655.9px;top:527px;font-size:15px;letter-spacing:0.154px;">Michele@gmail.com</div>
<div class="t" id="t42" style="left:1099.4px;top:527px;font-size:15px;color:#d9343f;letter-spacing:0.631px;">May-07</div>
<div class="t" id="t43" style="left:719.2px;top:563px;font-size:18px;color:#3ba4b6;letter-spacing:0.960px;">“ Please fix alignment of the Month/Date.”</div>
<div class="t" id="t44" style="left:705.7px;top:594px;font-size:15px;color:#6c757d;letter-spacing:0.438px;">— by Michael@good2gosoftware.com at 35 minutes ago</div>
<div class="t" id="t45" style="left:698.6px;top:688px;font-size:15px;letter-spacing:0.293px;">Lake Cover v35.pdf</div>
<div class="t" id="t46" style="left:1137px;top:687px;font-size:15px;letter-spacing:-0.229px;">v1</div>
<div class="t" id="t47" style="left:655.9px;top:735px;font-size:15px;letter-spacing:0.332px;">reiher217@gmail.com</div>
<div class="t" id="t48" style="left:1099.4px;top:735px;font-size:15px;letter-spacing:0.631px;">May-12</div>
<div class="t" id="t49" style="left:655.9px;top:821px;font-size:15px;font-weight:bold;-webkit-text-stroke:0;letter-spacing:0.148px;">Reminder sent:</div>
<div class="t" id="t50" style="left:772px;top:821px;font-size:15px;letter-spacing:0.450px;">May 12, 2021 at 7:40 AM</div>
<div class="t" id="t51" style="left:698.6px;top:877px;font-size:15px;letter-spacing:0.471px;">House Ad.pdf</div>
<div class="t" id="t52" style="left:1137px;top:876px;font-size:15px;letter-spacing:-0.229px;">v1</div>
<div class="t" id="t53" style="left:655.9px;top:924px;font-size:15px;letter-spacing:0.332px;">reiher217@gmail.com</div>
<div class="t" id="t54" style="left:1099.4px;top:924px;font-size:15px;letter-spacing:0.631px;">May-12</div>
<div class="t" id="t55" style="left:1024.2px;top:962px;font-size:16px;color:#fff;">1</div>
<div class="t" id="t56" style="left:1078px;top:965px;font-size:15px;letter-spacing:0.111px;">Page 1 of 1</div>
<div class="t" id="t57" style="left:557.5px;top:1024px;font-size:17.3px;color:#fff;letter-spacing:0.517px;">© 2021 Good2Go Software, LLC. ALL RIGHTS RESERVED</div>
<div class="t" id="t58" style="left:1246.3px;top:458px;font-size:18px;font-weight:bold;-webkit-text-stroke:0;letter-spacing:0.728px;">House Ad.pdf</div>
<div class="t" id="t59" style="left:1391.5px;top:462px;font-size:13.6px;color:#6c757d;letter-spacing:0.651px;">(v1)</div>
<div class="t" id="t60" style="left:1234.3px;top:507px;font-size:18.2px;letter-spacing:0.196px;">Status:</div>
<div class="t" id="t61" style="left:1302.5px;top:507px;font-size:18.2px;color:#6c757d;letter-spacing:0.227px;">Rejected</div>
<div class="t" id="t62" style="left:1234.3px;top:538px;font-size:18.2px;letter-spacing:0.413px;">Due Date:</div>
<div class="t" id="t63" style="left:1343px;top:538px;font-size:18.2px;letter-spacing:0.644px;">May 7, 2021, 2:00 PM</div>
<div class="t" id="t64" style="left:1234.3px;top:571px;font-size:18.2px;letter-spacing:0.921px;">Annotation:</div>
<div class="t" id="t65" style="left:1346.3px;top:571px;font-size:18.2px;color:#6c757d;letter-spacing:-0.509px;">Yes</div>
<div class="t" id="t66" style="left:1390.4px;top:575px;font-size:13.5px;color:#fff;font-weight:bold;-webkit-text-stroke:0;">5</div>
<div class="t" id="t67" style="left:1234.3px;top:601px;font-size:18.2px;letter-spacing:0.472px;">Auto Send Reminders:</div>
<div class="t" id="t68" style="left:1477.5px;top:601px;font-size:18.2px;color:#6c757d;letter-spacing:0.334px;">(enabled)</div>
<div class="t" id="t69" style="left:1288.7px;top:646px;font-size:18.4px;font-weight:bold;-webkit-text-stroke:0;letter-spacing:0.589px;">Document Info</div>
<div class="t" id="t70" style="left:1278px;top:682px;font-size:18.2px;letter-spacing:0.362px;">File size:</div>
<div class="t" id="t71" style="left:1363.5px;top:682px;font-size:18.2px;color:#6c757d;letter-spacing:0.606px;">870.84 KB</div>
<div class="t" id="t72" style="left:1278px;top:735px;font-size:18.2px;letter-spacing:-0.259px;">Pages:</div>
<div class="t" id="t73" style="left:1344.4px;top:735px;font-size:18.2px;color:#6c757d;">1</div>
<div class="t" id="t74" style="left:1343.6px;top:771px;font-size:15.5px;">1</div>
<div class="t" id="t75" style="left:1278px;top:805px;font-size:18.2px;letter-spacing:-0.053px;">Size:</div>
<div class="t" id="t76" style="left:1328px;top:805px;font-size:18.2px;color:#6c757d;letter-spacing:0.884px;">4.88 x 4.00 inches</div>
<div class="t" id="t77" style="left:1278px;top:836px;font-size:18.2px;letter-spacing:0.077px;">Page Label:</div>
<div class="t" id="t78" style="left:1386.7px;top:836px;font-size:18.2px;color:#6c757d;">1</div>
<div class="t" id="t79" style="left:1278px;top:867px;font-size:18.2px;letter-spacing:0.612px;">Rotation:</div>
<div class="t" id="t80" style="left:1366.8px;top:867px;font-size:18.2px;color:#6c757d;">0</div>
<div class="t" id="t81" style="left:1288.7px;top:934px;font-size:18.4px;font-weight:bold;-webkit-text-stroke:0;letter-spacing:0.588px;">Customer Info</div>
<div class="t" id="t82" style="left:1278px;top:977px;font-size:18.2px;letter-spacing:0.360px;">Name:</div>
<div class="t" id="t83" style="left:1353.8px;top:977px;font-size:18.2px;color:#6c757d;letter-spacing:0.519px;">Michele Thomas</div>
</body></html>
